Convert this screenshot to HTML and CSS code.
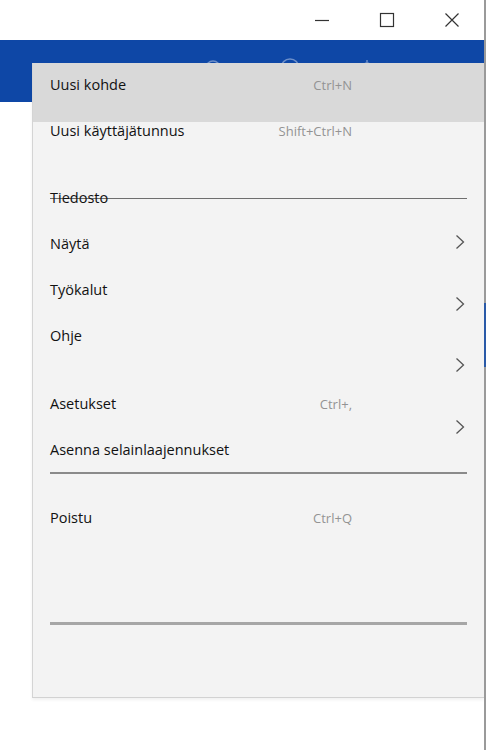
FILE: index.html
```html
<!DOCTYPE html>
<html lang="fi">
<head>
  <meta charset="UTF-8">
  <meta name="viewport" content="width=device-width, initial-scale=1.0">
  <title>Valikko</title>
  <link rel="stylesheet" href="styles.css">
</head>
<body>
  <div class="window">
    <header class="titlebar">
      <span class="ctl">
        <svg width="16" height="16" viewBox="0 0 16 16"><path d="M1 8.5h14" stroke="#333" stroke-width="1.2"/></svg>
      </span>
      <span class="ctl">
        <svg width="16" height="16" viewBox="0 0 16 16"><rect x="1.5" y="1.5" width="13" height="13" fill="none" stroke="#333" stroke-width="1.2"/></svg>
      </span>
      <span class="ctl">
        <svg width="16" height="16" viewBox="0 0 16 16"><path d="M1.5 1.5l13 13M14.5 1.5l-13 13" stroke="#333" stroke-width="1.2"/></svg>
      </span>
    </header>

    <div class="appbar">
      <div class="appbar-icons">
        <svg width="20" height="20" viewBox="0 0 20 20"><circle cx="10" cy="11" r="7" fill="none" stroke="#6d8fc9" stroke-width="1.5"/></svg>
        <svg width="20" height="20" viewBox="0 0 20 20"><circle cx="10" cy="11" r="9" fill="none" stroke="#6d8fc9" stroke-width="1.5"/></svg>
        <svg width="20" height="20" viewBox="0 0 20 20"><path d="M10 3v3M6 10a4 4 0 0 1 8 0v6H6z" fill="none" stroke="#6d8fc9" stroke-width="1.5"/></svg>
      </div>
    </div>

    <nav class="menu">
      <div class="menu-stack">
        <ul class="menu-list">
          <li class="item item-active"><span>Uusi kohde</span><span class="key">Ctrl+N</span></li>
          <li class="item item-first"><span>Uusi käyttäjätunnus</span><span class="key">Shift+Ctrl+N</span></li>
          <li class="section-title">Tiedosto</li>
          <li class="item"><span>Näytä</span></li>
          <li class="item"><span>Työkalut</span></li>
          <li class="item"><span>Ohje</span></li>
          <li class="item item-spaced"><span>Asetukset</span><span class="key">Ctrl+,</span></li>
          <li class="item"><span>Asenna selainlaajennukset</span></li>
          <li class="sep"></li>
          <li class="item item-exit"><span>Poistu</span><span class="key">Ctrl+Q</span></li>
          <li class="sep sep-bottom"></li>
        </ul>
        <div class="chevrons">
          <svg width="10" height="16" viewBox="0 0 10 16"><path d="M1.5 1.5L8.5 8l-7 6.5" fill="none" stroke="#555" stroke-width="1.3"/></svg>
          <svg width="10" height="16" viewBox="0 0 10 16"><path d="M1.5 1.5L8.5 8l-7 6.5" fill="none" stroke="#555" stroke-width="1.3"/></svg>
          <svg width="10" height="16" viewBox="0 0 10 16"><path d="M1.5 1.5L8.5 8l-7 6.5" fill="none" stroke="#555" stroke-width="1.3"/></svg>
          <svg width="10" height="16" viewBox="0 0 10 16"><path d="M1.5 1.5L8.5 8l-7 6.5" fill="none" stroke="#555" stroke-width="1.3"/></svg>
        </div>
      </div>
    </nav>
  </div>
</body>
</html>
```

FILE: styles.css
```css
body {
  margin: 0;
  font-family: "Open Sans", "Noto Sans", sans-serif;
  background-color: #ffffff;
}
.window {
  position: relative;
  width: 486px;
  height: 750px;
  box-sizing: border-box;
  border-right: 2px solid #9a9a9a;
  border-image: linear-gradient(to bottom, #9a9a9a 303px, #2a5aa8 303px, #2a5aa8 367px, #9a9a9a 367px) 1;
  overflow: hidden;
  background-color: #ffffff;
}
.titlebar {
  height: 40px;
  display: flex;
  justify-content: flex-end;
}
.ctl {
  width: 65px;
  display: flex;
  align-items: center;
  justify-content: center;
}
.appbar {
  height: 62px;
  background-color: #0e47a6;
}
.appbar-icons {
  display: flex;
  gap: 57px;
  padding: 17px 0 0 203px;
}
.menu {
  position: absolute;
  top: 63px;
  left: 32px;
  right: 0;
  height: 635px;
  box-sizing: border-box;
  background-color: #f3f3f3;
  border-left: 1px solid #d4d4d4;
  border-bottom: 1px solid #d2d2d2;
  box-shadow: 0 2px 3px rgba(0, 0, 0, 0.06);
}
.menu-stack {
  display: grid;
}
.menu-list,
.chevrons {
  grid-area: 1 / 1;
}
.menu-list {
  list-style: none;
  margin: 0;
  padding: 0;
}
.item {
  display: grid;
  grid-template-columns: 1fr auto;
  align-items: center;
  padding: 0 132px 0 17px;
  margin-top: 26px;
  line-height: 20px;
  font-size: 14.5px;
  color: #111111;
}
.item-active {
  margin-top: 0;
  padding-top: 12px;
  padding-bottom: 27px;
  background-color: #d9d9d9;
}
.item-first {
  margin-top: -1px;
}
.item-spaced {
  margin-top: 48px;
}
.item-exit {
  margin-top: 34px;
}
.key {
  font-size: 13px;
  color: #939393;
}
.section-title {
  margin: 47px 17px 0;
  line-height: 20px;
  font-size: 14.5px;
  color: #111111;
  background: linear-gradient(#6e6e6e, #6e6e6e) center / 100% 1px no-repeat;
}
.sep {
  margin: 12px 17px 0;
  height: 2px;
  background-color: #8a8a8a;
}
.sep-bottom {
  margin-top: 94px;
  height: 3px;
  background-color: #a6a6a6;
}
.chevrons {
  justify-self: end;
  display: flex;
  flex-direction: column;
  gap: 45.5px;
  padding-top: 171px;
  margin-right: 19px;
}
```
